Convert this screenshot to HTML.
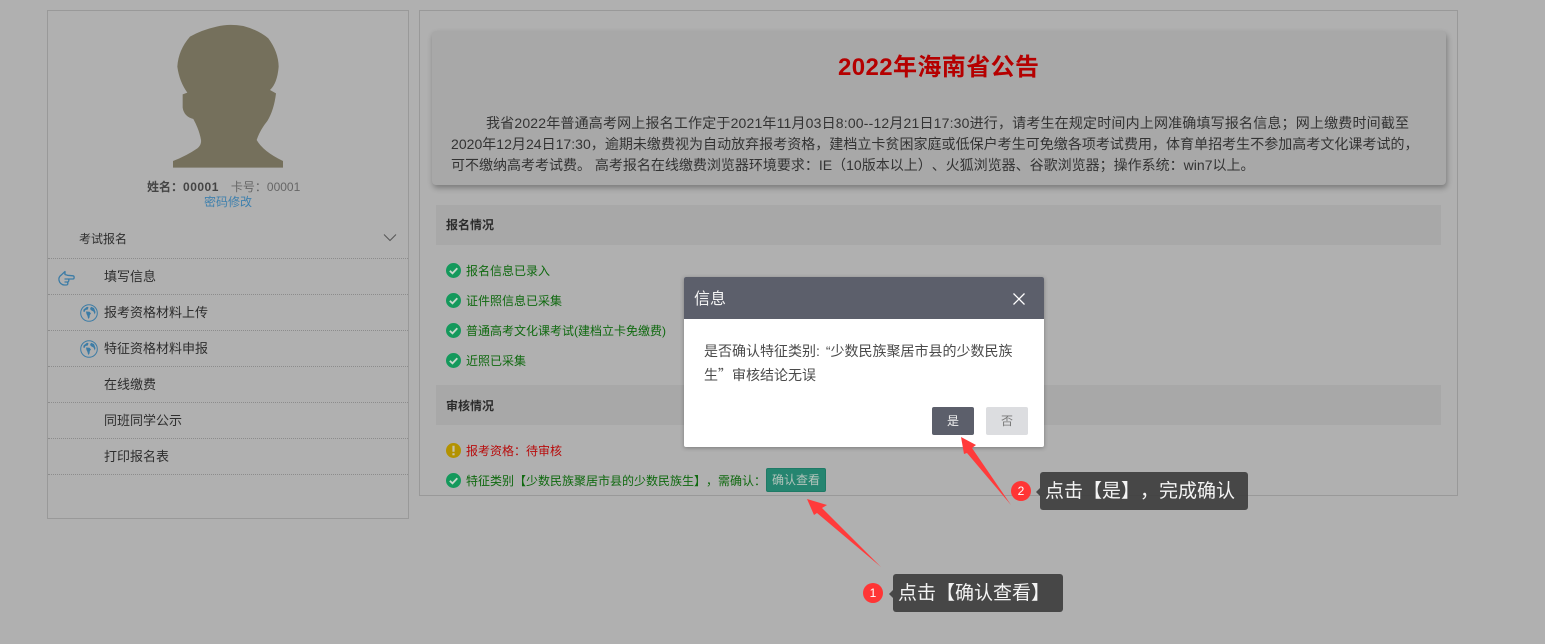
<!DOCTYPE html>
<html lang="zh-CN">
<head>
<meta charset="utf-8">
<title>报名</title>
<style>
html,body{margin:0;padding:0;width:1545px;height:644px;overflow:hidden;background:#b0b0b0;font-family:"Liberation Sans","Noto Sans CJK SC",sans-serif;text-spacing-trim:space-all;}
.a{position:absolute;white-space:nowrap;}
.box{position:absolute;box-sizing:border-box;border:1px solid #999;}
.dot{position:absolute;left:48px;width:360px;height:0;border-top:1px dotted #8c8c8c;}
.m{position:absolute;left:104px;font-size:13px;line-height:18px;color:#2e2e2e;white-space:nowrap;}
.n{position:absolute;left:451px;font-size:14px;line-height:20px;color:#333;white-space:nowrap;}
.sec{position:absolute;left:436px;width:1005px;height:40px;background:#a8a8a8;}
.st{position:absolute;left:446px;font-size:12px;font-weight:bold;line-height:18px;color:#2c2c2c;white-space:nowrap;}
.i{position:absolute;left:466px;font-size:12px;line-height:18px;color:#0f690f;white-space:nowrap;}
.ck{position:absolute;left:446px;width:15px;height:15px;}
.cjk{font-family:"Noto Sans CJK SC",sans-serif;}
</style>
</head>
<body>
<div class="box" style="left:47px;top:10px;width:362px;height:509px;"></div>
<div class="box" style="left:419px;top:10px;width:1039px;height:486px;"></div>

<svg class="a" style="left:160px;top:15px;" width="130" height="160" viewBox="0 0 390 480"><path fill="#75705c" d="M39 458V438Q80 422 112 400Q125 390 123 375Q118 345 100 312Q72 305 68 278V238L82 233Q58 200 52 155Q55 105 90 65Q125 45 170 35Q205 25 250 33Q295 45 325 70Q355 110 356 155Q352 205 330 225L348 235Q342 285 322 318Q300 345 290 375Q310 410 369 438V458Z"/></svg>

<div class="a" style="left:147px;top:178px;font-size:12px;line-height:18px;color:#444;"><b>姓名&#65306;<span style="letter-spacing:.5px">00001</span></b><span style="color:#666;margin-left:12px;">卡号&#65306;00001</span></div>
<div class="a" style="left:204px;top:193px;font-size:12px;line-height:18px;color:#3f80ad;">密码修改</div>
<div class="a" style="left:79px;top:230px;font-size:12px;line-height:18px;color:#2e2e2e;">考试报名</div>
<svg class="a" style="left:383px;top:233px;" width="14" height="9"><path d="M1 1.500 7 7.500 13 1.500" fill="none" stroke="#555" stroke-width="1"/></svg>

<div class="dot" style="top:258px"></div>
<div class="dot" style="top:294px"></div>
<div class="dot" style="top:330px"></div>
<div class="dot" style="top:366px"></div>
<div class="dot" style="top:402px"></div>
<div class="dot" style="top:438px"></div>
<div class="dot" style="top:474px"></div>

<svg class="a" style="left:57px;top:269px;" width="18" height="18" viewBox="0 0 18 18"><path d="M8 2.500 4.500 5.800C2.500 7.200 1.500 9 2 11.200 2.500 14 4.800 16 7.500 16H9.500C10.800 16 11.200 14.800 10.500 13.200 11.800 13 12.200 11.200 11.500 10H16C17.500 10 17.500 6.800 16 6.800L10.500 6.300 8 5.500z M7.500 10H11.500 M7.500 13H10.500" fill="none" stroke="#3c7ca6" stroke-width="1.300" stroke-linejoin="round"/></svg>
<div class="m" style="top:268px">填写信息</div>

<svg class="a" style="left:80px;top:304px;" width="18" height="18" viewBox="0 0 18 18"><circle cx="9" cy="9" r="8.300" fill="none" stroke="#3c7ca6" stroke-width="1"/><path fill="#3c7ca6" d="M3.500 5.500 7 2.800 8.500 3.300 7.800 5.500 5.500 6 4.500 8 3.300 7.500zM6 7.500 9.500 7.800 11 9.500 9.800 11 9.500 13.500 8.200 15 7.500 12 6.500 10zM11 2.800 14 4 15.500 8 14.800 10.500 13.500 7.500 11.500 6.500 10 5z"/></svg>
<div class="m" style="top:304px">报考资格材料上传</div>

<svg class="a" style="left:80px;top:340px;" width="18" height="18" viewBox="0 0 18 18"><circle cx="9" cy="9" r="8.300" fill="none" stroke="#3c7ca6" stroke-width="1"/><path fill="#3c7ca6" d="M3.500 5.500 7 2.800 8.500 3.300 7.800 5.500 5.500 6 4.500 8 3.300 7.500zM6 7.500 9.500 7.800 11 9.500 9.800 11 9.500 13.500 8.200 15 7.500 12 6.500 10zM11 2.800 14 4 15.500 8 14.800 10.500 13.500 7.500 11.500 6.500 10 5z"/></svg>
<div class="m" style="top:340px">特征资格材料申报</div>

<div class="m" style="top:376px">在线缴费</div>
<div class="m" style="top:412px">同班同学公示</div>
<div class="m" style="top:448px">打印报名表</div>

<div style="position:absolute;left:432px;top:31px;width:1014px;height:154px;background:#a8a8a8;border-radius:4px;box-shadow:1px 3px 6px rgba(0,0,0,.3);"></div>
<div class="a" style="left:838px;top:51px;font-size:24px;line-height:34px;font-weight:bold;color:#b50000;letter-spacing:.4px;">2022年海南省公告</div>
<div class="n" style="left:486px;top:113px;letter-spacing:.18px;">我省2022年普通高考网上报名工作定于2021年11月03日8:00--12月21日17:30进行&#65292;请考生在规定时间内上网准确填写报名信息&#65307;网上缴费时间截至</div>
<div class="n" style="top:134px;letter-spacing:.03px;">2020年12月24日17:30&#65292;逾期未缴费视为自动放弃报考资格&#65292;建档立卡贫困家庭或低保户考生可免缴各项考试费用&#65292;体育单招考生不参加高考文化课考试的&#65292;</div>
<div class="n" style="top:155px">可不缴纳高考考试费。 高考报名在线缴费浏览器环境要求&#65306;IE&#65288;10版本以上&#65289;、火狐浏览器、谷歌浏览器&#65307;操作系统&#65306;win7以上。</div>

<div class="sec" style="top:205px"></div>
<div class="st" style="top:216px">报名情况</div>

<svg class="ck" style="top:263px" viewBox="0 0 15 15"><circle cx="7.500" cy="7.500" r="7.500" fill="#14995c"/><path d="M3.800 7.800 6.500 10.300 11.300 5.200" fill="none" stroke="#c8d8cc" stroke-width="1.800"/></svg>
<div class="i" style="top:262px">报名信息已录入</div>
<svg class="ck" style="top:293px" viewBox="0 0 15 15"><circle cx="7.500" cy="7.500" r="7.500" fill="#14995c"/><path d="M3.800 7.800 6.500 10.300 11.300 5.200" fill="none" stroke="#c8d8cc" stroke-width="1.800"/></svg>
<div class="i" style="top:292px">证件照信息已采集</div>
<svg class="ck" style="top:323px" viewBox="0 0 15 15"><circle cx="7.500" cy="7.500" r="7.500" fill="#14995c"/><path d="M3.800 7.800 6.500 10.300 11.300 5.200" fill="none" stroke="#c8d8cc" stroke-width="1.800"/></svg>
<div class="i" style="top:322px">普通高考文化课考试(建档立卡免缴费)</div>
<svg class="ck" style="top:353px" viewBox="0 0 15 15"><circle cx="7.500" cy="7.500" r="7.500" fill="#14995c"/><path d="M3.800 7.800 6.500 10.300 11.300 5.200" fill="none" stroke="#c8d8cc" stroke-width="1.800"/></svg>
<div class="i" style="top:352px">近照已采集</div>

<div class="sec" style="top:385px"></div>
<div class="st" style="top:397px">审核情况</div>

<svg class="ck" style="top:443px" viewBox="0 0 15 15"><circle cx="7.500" cy="7.500" r="7.500" fill="#b39200"/><path d="M7.500 2.800V8.800M7.500 10.300V12.300" fill="none" stroke="#c9c2a8" stroke-width="2.200"/></svg>
<div class="i" style="top:442px;color:#b80c0c">报考资格&#65306;待审核</div>
<svg class="ck" style="top:473px" viewBox="0 0 15 15"><circle cx="7.500" cy="7.500" r="7.500" fill="#14995c"/><path d="M3.800 7.800 6.500 10.300 11.300 5.200" fill="none" stroke="#c8d8cc" stroke-width="1.800"/></svg>
<div class="i" style="top:472px">特征类别【少数民族聚居市县的少数民族生】&#65292;需确认&#65306;</div>
<div style="position:absolute;left:766px;top:468px;width:60px;height:24px;box-sizing:border-box;background:#258570;border:1px solid #1f7a66;border-radius:2px;color:#b4c4bc;font-size:12px;line-height:22px;text-align:center;">确认查看</div>

<div style="position:absolute;left:684px;top:277px;width:360px;height:170px;background:#fff;border-radius:2px;overflow:hidden;box-shadow:0 1px 4px rgba(0,0,0,.3);">
  <div style="position:absolute;left:0;top:0;width:360px;height:42px;background:#5c5f6b;"></div>
  <div class="a" style="left:10px;top:11px;font-size:16px;line-height:23px;color:#f4f4f4;">信息</div>
  <svg class="a" style="left:328px;top:15px;" width="14" height="14"><path d="M1.500 1.500 12.500 12.500M12.500 1.500 1.500 12.500" stroke="#fff" stroke-width="1.300"/></svg>
  <div class="a" style="left:20px;top:62px;font-size:14px;line-height:24px;color:#4a4a4a;">是否确认特征类别<span style="margin-right:6px">:</span>“少数民族聚居市县的少数民族<br>生<span class="cjk">&#8221;</span>审核结论无误</div>
  <div style="position:absolute;left:248px;top:130px;width:42px;height:28px;background:#5c5f6b;border-radius:2px;color:#f2f2f2;font-size:12px;line-height:28px;text-align:center;">是</div>
  <div style="position:absolute;left:302px;top:130px;width:42px;height:28px;background:#dcdde0;border-radius:2px;color:#777;font-size:12px;line-height:28px;text-align:center;">否</div>
</div>

<svg class="a" style="left:0;top:0;" width="1545" height="644"><polygon fill="#ff3b3b" points="807,499 827,505 822,508 881,567 817,513 814,515"/><polygon fill="#ff3b3b" points="961,437 976,445 972,448 1011,505 967,453 964,454"/></svg>

<div style="position:absolute;left:1011px;top:481px;width:20px;height:20px;border-radius:50%;background:#ff3535;color:#fff;font-size:12px;line-height:20px;text-align:center;">2</div>
<div style="position:absolute;left:1036px;top:488px;width:0;height:0;border:4px solid transparent;border-left:0;border-right-color:#484848;"></div>
<div style="position:absolute;left:1040px;top:472px;width:208px;height:38px;background:rgba(60,60,60,.9);border-radius:3px;"></div>
<div class="a" style="left:1045px;top:478px;font-size:19px;line-height:28px;color:#f4f4f4;">点击【是】&#65292;完成确认</div>

<div style="position:absolute;left:863px;top:583px;width:20px;height:20px;border-radius:50%;background:#ff3535;color:#fff;font-size:12px;line-height:20px;text-align:center;">1</div>
<div style="position:absolute;left:889px;top:590px;width:0;height:0;border:4px solid transparent;border-left:0;border-right-color:#484848;"></div>
<div style="position:absolute;left:893px;top:574px;width:170px;height:38px;background:rgba(60,60,60,.9);border-radius:3px;"></div>
<div class="a" style="left:898px;top:580px;font-size:19px;line-height:28px;color:#f4f4f4;">点击【确认查看】</div>
</body>
</html>
